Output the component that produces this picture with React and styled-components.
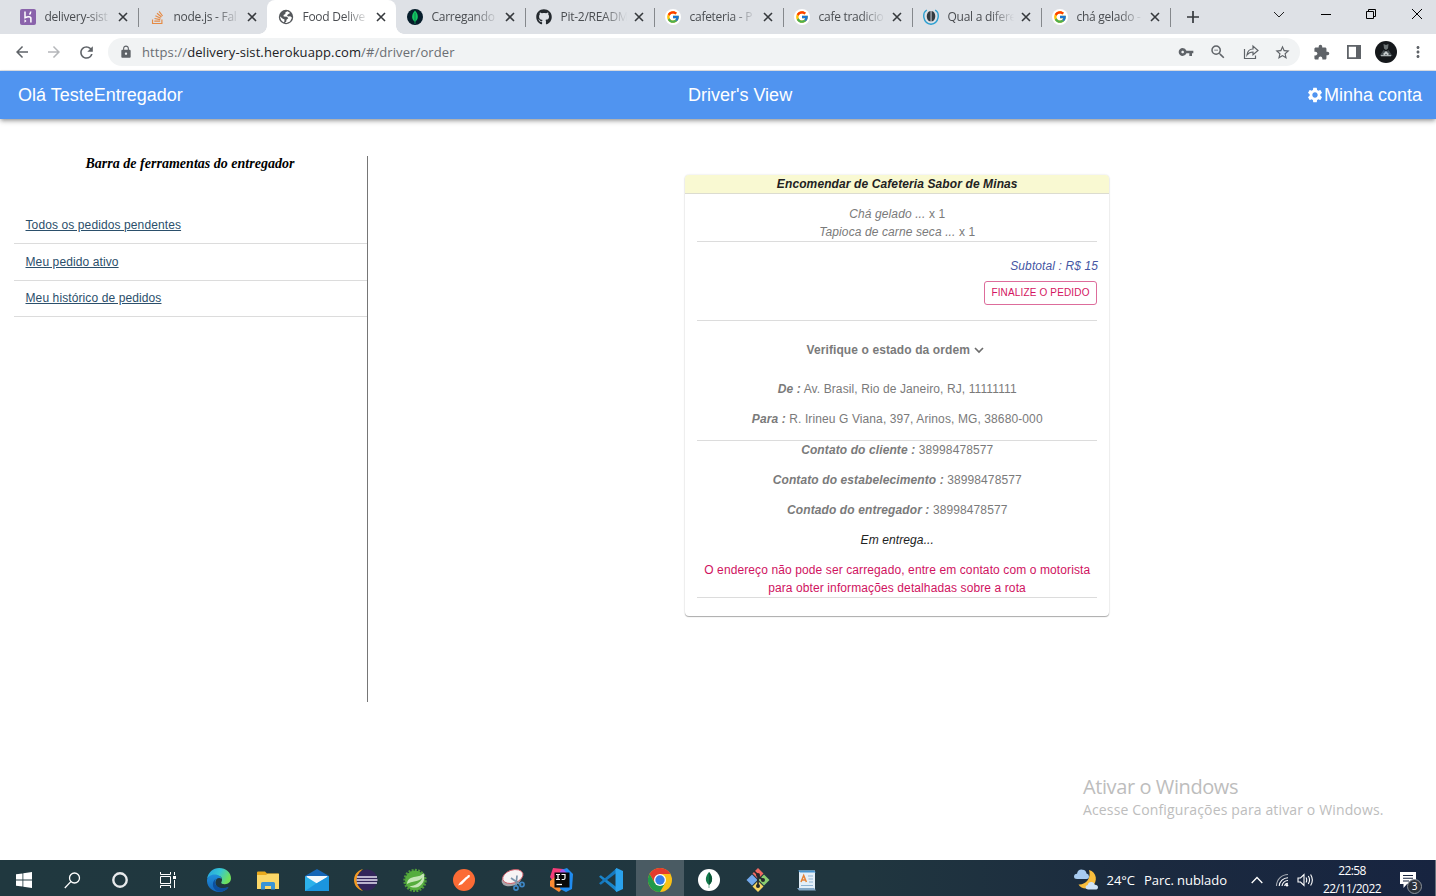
import React from "react";
import styled, { createGlobalStyle } from "styled-components";
import {
  MdVpnKey, MdZoomOut, MdStarBorder, MdExtension, MdSettings, MdLock,
  MdArrowBack, MdArrowForward, MdRefresh, MdMoreVert,
} from "react-icons/md";
import { FaStackOverflow, FaGithub } from "react-icons/fa";
import { FcGoogle } from "react-icons/fc";

const GlobalStyle = createGlobalStyle`
  * { box-sizing: border-box; }
  body { margin: 0; background: #fff; overflow: hidden; }
  svg { display: block; flex: none; }
`;

const ui = `"Open Sans", "Noto Sans", sans-serif`;
const arial = `"Liberation Sans", Arial, sans-serif`;

const Screen = styled.div`
  display: flex;
  flex-direction: column;
  width: 1436px;
  height: 896px;
`;

/* ---------- Browser ---------- */
const TabStrip = styled.div`
  display: flex;
  height: 34px;
  padding-left: 9px;
  background: #dee1e6;
  font-family: ${ui};
`;

const Tab = styled.div`
  position: relative;
  display: flex;
  align-items: center;
  width: 129px;
  height: 34px;
  padding: 0 0 0 11px;
  border-radius: 8px 8px 0 0;
  background: ${(p) => (p.$active ? "#fff" : "transparent")};
  color: #4a4d51;

  &::before {
    content: "";
    display: ${(p) => (p.$active ? "block" : "none")};
    position: absolute;
    left: -8px;
    right: -8px;
    bottom: 0;
    height: 8px;
    background:
      radial-gradient(circle at 0 0, transparent 7.5px, #fff 8px) left / 8px 8px no-repeat,
      radial-gradient(circle at 100% 0, transparent 7.5px, #fff 8px) right / 8px 8px no-repeat;
  }

  &::after {
    content: "";
    position: absolute;
    right: -1px;
    top: 8px;
    width: 1px;
    height: 19px;
    background: ${(p) => (p.$line ? "#85888c" : "transparent")};
  }
`;

const Favicon = styled.span`
  display: flex;
  align-items: center;
  justify-content: center;
  width: 16px;
  height: 16px;
  border-radius: 50%;
  background: ${(p) => p.$bg || "transparent"};
`;

const TabTitle = styled.span`
  width: 72px;
  margin: 0 0 1px 8.5px;
  white-space: nowrap;
  font-size: 12px;
  letter-spacing: -0.27px;
  mask-image: linear-gradient(90deg, #000 58%, transparent 92%);
`;

const TabClose = styled.span`
  display: flex;
  margin-left: 1.5px;
`;

const NewTab = styled.div`
  display: flex;
  align-items: center;
  margin-left: 17px;
`;

const WindowControls = styled.div`
  display: flex;
  align-items: center;
  gap: 34px;
  margin-left: auto;
  padding: 0 13px 6px 0;

  svg:first-child { margin-right: 2px; }
`;

const AddressRow = styled.div`
  display: flex;
  align-items: center;
  height: 37px;
  padding: 0 9px 0 13px;
  border-bottom: 1px solid #dfe1e5;
  background: #fff;
  color: #5f6368;
`;

const NavButtons = styled.div`
  display: flex;
  gap: 14px;
  width: 95px;
`;

const Omnibox = styled.div`
  display: flex;
  align-items: center;
  width: 1192px;
  height: 28px;
  padding: 0 9px 0 11px;
  border-radius: 14px;
  background: #f1f3f4;
`;

const Url = styled.span`
  margin: 0 auto 1px 9px;
  font: 13px/18px ${ui};
  letter-spacing: 0.1px;
  color: #6a6e73;
`;

const Host = styled.span`
  color: #202124;
`;

const OmniIcons = styled.div`
  display: flex;
  align-items: center;
  gap: 15.5px;
`;

const ToolIcons = styled.div`
  display: flex;
  align-items: center;
  gap: 14px;
  margin-left: 13px;

  svg:nth-child(2) { margin-left: 3px; }
  svg:last-child { margin-left: -2px; }
`;

/* ---------- Page ---------- */
const AppBar = styled.header`
  display: grid;
  grid-template-columns: 670px auto 1fr;
  align-items: center;
  flex: none;
  height: 48px;
  padding: 0 14px 0 18px;
  background: #5094f0;
  box-shadow: 0 2px 4px -1px rgba(0, 0, 0, 0.35), 0 3px 5px rgba(0, 0, 0, 0.14);
  color: #fff;
  font: 18px/24px ${arial};
`;

const Account = styled.span`
  display: flex;
  align-items: center;
  justify-content: flex-end;
`;

const Page = styled.main`
  display: flex;
  flex: 1;
  padding: 37px 0 0 14px;
  font-family: ${arial};
`;

const Sidebar = styled.aside`
  width: 354px;
  height: 546px;
  border-right: 1px solid #767676;
`;

const SidebarTitle = styled.h2`
  margin: 0 0 35.5px;
  padding-right: 1px;
  font: italic bold 14px/16px "Liberation Serif", "Times New Roman", serif;
  letter-spacing: 0.016px;
  text-align: center;
  color: #000;
`;

const SidebarItem = styled.div`
  display: flex;
  align-items: center;
  height: 36.5px;
  padding: 0 0 0 11.5px;
  border-bottom: 1px solid #dcdcdc;
`;

const SidebarLink = styled.a`
  font-size: 12px;
  line-height: 18px;
  letter-spacing: 0.107px;
  text-decoration: underline;
  color: #2b4f6b;
`;

const Content = styled.section`
  flex: 1;
  padding: 19px 0 0 317px;
`;

const Card = styled.article`
  width: 424px;
  height: 441px;
  border-radius: 4px;
  overflow: hidden;
  box-shadow: 0 1px 1px rgba(0, 0, 0, 0.3), 0 0 2px rgba(0, 0, 0, 0.16);
  font-size: 12px;
  line-height: 18px;
  letter-spacing: 0.107px;
  text-align: center;
  text-indent: 0.5px;
  color: #7a7a7a;
`;

const CardHeader = styled.div`
  height: 19px;
  border-bottom: 1px solid #dcdcd0;
  background: #f9f9d2;
  font-weight: bold;
  font-style: italic;
  color: #222;
`;

const CardBody = styled.div`
  padding: 11px 12px 0;
`;

const Block = styled.div`
  height: ${(p) => p.$h}px;
  padding-top: ${(p) => p.$top || 0}px;
  border-bottom: 1px solid #dcdcdc;
`;

const Line = styled.div`
  margin-bottom: ${(p) => p.$gap || 0}px;
  color: ${(p) => p.$color || "inherit"};
  font-style: ${(p) => (p.$italic ? "italic" : "normal")};
`;

const Label = styled.span`
  font-weight: bold;
  font-style: italic;
`;

const Subtotal = styled.div`
  margin-right: -1px;
  text-align: right;
  font-style: italic;
  color: #4656a3;
`;

const Finalize = styled.button`
  display: block;
  width: 113px;
  height: 24px;
  margin: 6px 0 0 auto;
  padding: 0;
  border: 1px solid #dd6c9b;
  border-radius: 3px;
  background: #fff;
  color: #d41461;
  font: 10px/22px ${arial};
  letter-spacing: 0.15px;
`;

const StatusToggle = styled.div`
  display: flex;
  align-items: center;
  justify-content: center;
  gap: 4px;
  margin-bottom: 21px;
  padding-right: 4px;
  font-weight: bold;
`;

const Watermark = styled.div`
  position: absolute;
  left: 1083px;
  top: 775px;
  font-family: ${ui};
  color: #bdbdbd;
  white-space: nowrap;
`;

const WatermarkTitle = styled.div`
  font-size: 20px;
  line-height: 24px;
  letter-spacing: -0.41px;
`;

const WatermarkText = styled.div`
  font-size: 14px;
  line-height: 21px;
  letter-spacing: 0.14px;
`;

/* ---------- Taskbar ---------- */
const Taskbar = styled.footer`
  display: flex;
  flex: none;
  height: 36px;
  border-right: 1px solid #68727e;
  background: linear-gradient(90deg, #20383f 0%, #20363f 60%, #1b2a3f 80%, #172440 100%);
  color: #fff;
  font-family: ${ui};
`;

const TaskGroup = styled.div`
  display: flex;
  gap: ${(p) => p.$gap || 0}px;
  margin-left: ${(p) => p.$left || 0}px;
`;

const TaskCell = styled.div`
  display: flex;
  align-items: center;
  justify-content: center;
  width: 48px;
  height: 36px;
  padding-top: 4px;
  background: ${(p) => (p.$active ? "#4a5b63" : "transparent")};
`;

const Tray = styled.div`
  display: flex;
  align-items: center;
  margin-left: auto;
  padding: 4px 19px 0 0;
`;

const Weather = styled.span`
  margin-left: ${(p) => p.$left}px;
  font-size: 13px;
  letter-spacing: -0.04px;
`;

const TrayIcons = styled.div`
  display: flex;
  align-items: center;
  gap: 8px;
  margin-left: 24px;

  svg:first-child { margin-right: 4px; }
`;

const Clock = styled.div`
  width: 62px;
  margin: -1px 0 0 7px;
  font-size: 12px;
  line-height: 18px;
  letter-spacing: -0.57px;
  text-align: center;
`;

const Notifications = styled.div`
  position: relative;
  margin-left: 17px;
`;

const Badge = styled.span`
  position: absolute;
  left: 7px;
  top: 7px;
  width: 15px;
  height: 15px;
  border: 1px solid #8b929b;
  border-radius: 50%;
  background: #2a3039;
  font-size: 10px;
  line-height: 13px;
  text-align: center;
`;

/* ---------- Drawings ---------- */
const HerokuIcon = () => (
  <svg width="16" height="16" viewBox="0 0 16 16">
    <rect width="16" height="16" rx="2" fill="#8a63ab" />
    <path d="M5 2.500v6.200c2.500-1.100 5.900-1.500 5.900.7v4.100M10.700 2.500c0 1.300-.4 2.300-1.300 3" fill="none" stroke="#fff" strokeWidth="1.500" />
    <path d="M4.500 10.300l2 1.700-2 1.700z" fill="#fff" />
  </svg>
);

const GlobeIcon = () => (
  <svg width="16" height="16" viewBox="0 0 16 16">
    <circle cx="8" cy="8" r="7.200" fill="#54575b" />
    <path d="M9.500 2.300l-2 .9-.2 1.800-1.800 1 .2 1.500 3.300.2 1.300 1.500-1.800 1.500-.3 2-1.400 1.200L8.500 14l3.500-1.500 2-3.800-1.800-1.500-2.200.2L9 6.200l1.500-1.300 1.700-.8z" fill="#fff" />
    <path d="M1.800 7.200l3 2.600 1.700.7-.2 2.200-1 .5L3 11z" fill="#fff" />
  </svg>
);

const LeafIcon = ({ leaf = "#13c464" }) => (
  <svg width="16" height="16" viewBox="0 0 16 16">
    <path d="M8 1.500c3.500 3.500 4 8.500.3 11.200V15h-.6v-2.300C4 10 4.500 5 8 1.500z" fill={leaf} />
    <path d="M8 4v9" stroke="#0a5a37" strokeWidth=".6" />
  </svg>
);

const BeanIcon = () => (
  <svg width="16" height="16" viewBox="0 0 16 16" fill="none">
    <path d="M3.800 1C-1 4-.3 14.500 8 15.200 16.300 14.500 17 4 12.200 1" stroke="#2c9fd0" strokeWidth="1.400" />
    <path d="M7.600 2C2.500 2.600 2.500 11.900 7.600 12.600zM8.500 2c5.100.6 5.100 9.900 0 10.600z" fill="#343a40" />
  </svg>
);

const TabCloseIcon = () => (
  <svg width="10" height="10" viewBox="0 0 10 10"><path d="M1 1l8 8M9 1L1 9" stroke="#36393d" strokeWidth="1.600" /></svg>
);

const PlusIcon = () => (
  <svg width="12" height="12" viewBox="0 0 12 12"><path d="M6 0v12M0 6h12" stroke="#36393d" strokeWidth="1.700" /></svg>
);

const ToggleChevron = () => (
  <svg width="10" height="8" viewBox="0 0 10 8" fill="none" stroke="#6d6d6d" strokeWidth="1.700"><path d="M1 2l4 4 4-4" /></svg>
);

const ChevronDown = () => (
  <svg width="12" height="12" viewBox="0 0 12 12" fill="none" stroke="#222">
    <path d="M1 4l5 5 5-5" />
  </svg>
);

const MinimizeIcon = () => (
  <svg width="10" height="11" viewBox="0 0 10 11"><path d="M0 5.500h10" stroke="#000" /></svg>
);

const RestoreIcon = () => (
  <svg width="12" height="12" viewBox="0 0 12 12" fill="none" stroke="#000">
    <path d="M1.500 3.500h7v7h-7zM3.500 3.500v-2h7v7h-2" />
  </svg>
);

const CloseIcon = () => (
  <svg width="12" height="12" viewBox="0 0 12 12"><path d="M1 1l10 10M11 1L1 11" stroke="#000" /></svg>
);

const ShareIcon = () => (
  <svg width="16" height="16" viewBox="0 0 16 16" fill="none" stroke="#5f6368" strokeWidth="1.200">
    <path d="M1.500 5v9.500h11v-3" />
    <path d="M4 11c.5-4 2.500-6 6-6V2l5 4.500-5 4.300V8C7.500 8 5.500 9 4 11z" />
  </svg>
);

const SidePanelIcon = () => (
  <svg width="14" height="14" viewBox="0 0 14 14">
    <path d="M.9.9h12.200v12.200H.9z" fill="none" stroke="#5f6368" strokeWidth="1.800" />
    <path d="M9 0h5v14H9z" fill="#5f6368" />
  </svg>
);

const AvatarIcon = () => (
  <svg width="22" height="22" viewBox="0 0 22 22">
    <circle cx="11" cy="11" r="11" fill="#15181b" />
    <path d="M8.500 3l2.500 1 2.500-1-.5 4.500L11 9 9 7.500z" fill="#6d7475" />
    <path d="M4.500 15l4-6 2.500 1.500L13.500 9l4 6z" fill="#454d50" />
    <path d="M8 13l3-3 3 3-1.500 1.500L11 12.700 9.500 14.500z" fill="#c5cbcc" />
    <path d="M6 14.700h10" stroke="#bcc2c3" strokeWidth="1.100" />
  </svg>
);

const StartIcon = () => (
  <svg width="16" height="16" viewBox="0 0 16 16" fill="#fff">
    <path d="M0 2.300l6.500-.9v6.200H0zM7.300 1.300L16 0v7.600H7.300zM0 8.400h6.500v6.200L0 13.700zM7.300 8.400H16V16l-8.700-1.300z" />
  </svg>
);

const SearchIcon = () => (
  <svg width="17" height="17" viewBox="0 0 17 17" fill="none" stroke="#fff" strokeWidth="1.300">
    <circle cx="10.500" cy="6" r="5" /><path d="M6.800 9.600L.8 16" />
  </svg>
);

const CortanaIcon = () => (
  <svg width="16" height="16" viewBox="0 0 16 16"><circle cx="8" cy="8" r="6.700" fill="none" stroke="#e8eaec" strokeWidth="2.400" /></svg>
);

const TaskViewIcon = () => (
  <svg width="17" height="16" viewBox="0 0 17 16" fill="none" stroke="#fff">
    <path d="M.5 0v2.500h10V0M.5 16v-2.500h10V16M.5 4.500h10v7H.5zM14.500 0v3M14.500 8v8" />
    <path d="M13 4h3v3h-3z" fill="#fff" stroke="none" />
  </svg>
);

const EdgeIcon = () => (
  <svg width="24" height="24" viewBox="0 0 24 24">
    <defs>
      <linearGradient id="edgeTop" x1="0" x2="1" y2=".4"><stop stopColor="#239fe0" /><stop offset=".55" stopColor="#36c6d4" /><stop offset="1" stopColor="#6ee05c" /></linearGradient>
      <linearGradient id="edgeSide" x1="0" x2="0" y2="1"><stop stopColor="#1f8fdb" /><stop offset="1" stopColor="#1464b8" /></linearGradient>
    </defs>
    <path d="M0 11C1 4.500 6 0 12.200 0 19 0 24 4.600 24 10.300c0 3.700-2.800 5.900-6.200 5.900-2.600 0-3.900-1-3.500-2 1.800-2.700.4-6.500-3.700-6.500C6.200 7.700 1.500 8 0 11z" fill="url(#edgeTop)" />
    <path d="M0 12C.2 8.400 4.500 5.800 9 6.500c3.400.5 5.500 2.500 5.600 4.600-3-2.700-6.800.2-6.100 4.300.7 3.900 5.200 6.500 12.900 3.800C19.400 22.300 16 24 12 24 5 24-.4 18.600 0 12z" fill="url(#edgeSide)" />
    <path d="M9.400 10.500c-3.500 3.200-.8 8.700 5 9.400 2.800.4 5.200-.1 7.200-.9C17.800 24.500 11 25 8.200 21.800 4.500 18.300 5.400 12.600 9.400 10.500z" fill="#0d4f9d" />
  </svg>
);

const FolderIcon = () => (
  <svg width="22" height="19" viewBox="0 0 22 19">
    <path d="M0 1.500Q0 .5 1 .5h7l2 2h11q1 0 1 1V17H0z" fill="#e9a91c" />
    <path d="M0 4h9l1.500-1.300H22V18H0z" fill="#fbd768" />
    <path d="M4 18.500v-6q0-1.500 1.500-1.500h11q1.500 0 1.500 1.500v6h-4V15H8v3.500z" fill="#3a94d6" />
  </svg>
);

const MailIcon = () => (
  <svg width="24" height="22" viewBox="0 0 24 22">
    <path d="M0 7L12 0l12 7v6H0z" fill="#1565b6" />
    <path d="M1.500 7h21v8h-21z" fill="#f4f8fb" />
    <path d="M0 7l12 7.500L24 7v15H0z" fill="#2cb1ea" />
    <path d="M0 22L12 14 24 7v15z" fill="#1b95df" />
  </svg>
);

const EclipseIcon = () => (
  <svg width="24" height="22" viewBox="0 0 24 22">
    <path d="M9 0C-3 3-3 19 9 22 2 17 2 5 9 0z" fill="#f39a22" />
    <circle cx="13" cy="11" r="10.500" fill="#33265a" />
    <path d="M3 8h20M2.500 11h21M3 14h20" stroke="#e8e4f2" strokeWidth="1.300" />
  </svg>
);

const SpringIcon = () => (
  <svg width="24" height="24" viewBox="0 0 24 24">
    <circle cx="12" cy="12.500" r="10.600" fill="none" stroke="#4f9d3a" strokeWidth="2.200" strokeDasharray="2 1.300" />
    <circle cx="12" cy="12.500" r="10" fill="#55ad3d" />
    <path d="M20.500 5C23 12 19 18.500 13 19.500c-2.500.4-5-.3-6.500-1.300C12 18 17.500 15 19.500 9.500 16 14 9 13 4 16c0-4.500 4-7 8.500-7.300 3.500-.2 6-1.400 8-3.700z" fill="#c4e6b6" />
  </svg>
);

const PostmanIcon = () => (
  <svg width="22" height="22" viewBox="0 0 22 22">
    <circle cx="11" cy="11" r="11" fill="#fb6b35" />
    <path d="M5 16.500l2-3 6.500-6 1.500 1.500-6 6.200z" fill="#fff" />
    <path d="M13.500 8.500l1.500-2.500 2 .3-.5 2-2.200 1.200z" fill="#fff" />
  </svg>
);

const SnipIcon = () => (
  <svg width="24" height="22" viewBox="0 0 24 22">
    <ellipse cx="10.500" cy="10.500" rx="10.300" ry="6.500" fill="#a8a5aa" transform="rotate(-18 10 10)" />
    <ellipse cx="12" cy="7.500" rx="10.500" ry="6.500" fill="#f7f4f5" stroke="#cf5a66" strokeWidth=".9" transform="rotate(-18 12 8)" />
    <path d="M10 9l10 7M16 6.500L15 17" stroke="#7c96ad" strokeWidth="1.700" />
    <g fill="none" stroke="#3e87c6" strokeWidth="1.600"><circle cx="21" cy="15.500" r="2.100" /><circle cx="15" cy="19" r="2.100" /></g>
  </svg>
);

const IdeaIcon = () => (
  <svg width="24" height="24" viewBox="0 0 24 24">
    <path d="M3 0l10 1-6 11-7 7 2-7-2-3z" fill="#f63d79" />
    <path d="M0 13l6-5 6 13-3 3-9-6z" fill="#fb8a32" />
    <path d="M11 2l6-2 6 6-1 15-6 3-6-3z" fill="#208cf0" />
    <path d="M10 3l3-2 5 5-8 2z" fill="#a45be6" />
    <rect x="4.500" y="4.500" width="15" height="15" fill="#090909" />
    <path d="M6 6.500h4M8 6.500v5M6 11.500h4M11.500 6.500H15V10q0 1.500-1.500 1.500h-1.800" fill="none" stroke="#fff" strokeWidth="1.200" />
    <path d="M6.500 16.500H12" stroke="#fff" strokeWidth="1.300" />
  </svg>
);

const CodeIcon = () => (
  <svg width="24" height="24" viewBox="0 0 24 24">
    <path d="M0 8.700L1.800 7.200 18 19.500V24z" fill="#1a86cc" />
    <path d="M0 15.300L1.800 16.800 18 4.500V0z" fill="#1679bf" />
    <path d="M17.500 0L24 3v18l-6.500 3-1-1.200V1.200z" fill="#2aa2ec" />
  </svg>
);

const ChromeIcon = () => (
  <svg width="24" height="24" viewBox="0 0 24 24">
    <circle cx="12" cy="12" r="12" fill="#fbc116" />
    <path d="M1.600 6A12 12 0 0 1 22.400 6H12L7 15z" fill="#e33b2e" />
    <path d="M1.600 6A12 12 0 0 0 12 24l5.200-9-10.400 0z" fill="#229a4b" />
    <circle cx="12" cy="12" r="6" fill="#fff" />
    <circle cx="12" cy="12" r="4.700" fill="#377de9" />
  </svg>
);

const CompassIcon = () => (
  <svg width="22" height="22" viewBox="0 0 22 22">
    <circle cx="11" cy="11" r="11" fill="#fff" />
    <path d="M11 3c4 4.500 4.200 9.500.3 12.700V19h-.6v-3.300C6.800 12.500 7 7.500 11 3z" fill="#147a4c" />
    <path d="M11 3c4 4.500 4.200 9.500.3 12.700H11z" fill="#0b5738" />
  </svg>
);

const GitIcon = () => (
  <svg width="24" height="24" viewBox="0 0 24 24">
    <path d="M12 0l5.500 5.500L12 11 6.500 5.500z" fill="#ef6a62" />
    <path d="M6 6.500l5.500 5.500L6 17.500.5 12z" fill="#73a9ed" />
    <path d="M18 6.500l5.500 5.500-5.500 5.500-5.500-5.500z" fill="#8bcf70" />
    <path d="M12 13l5.500 5.500L12 24l-5.500-5.500z" fill="#f5d464" />
    <path d="M8 3l4 4v11M12 8l5 4" stroke="#24292d" strokeWidth="1.700" fill="none" />
    <g fill="#24292d"><circle cx="12" cy="7" r="2" /><circle cx="17" cy="12" r="2" /><circle cx="12" cy="18" r="2" /></g>
  </svg>
);

const WordpadIcon = () => (
  <svg width="20" height="22" viewBox="0 0 20 22">
    <path d="M2 1.500h16V21H2z" fill="#e4eff8" />
    <path d="M1 1.500h16l2 2H3z" fill="#4694cf" />
    <path d="M0 19h17l2 2.500H2z" fill="#83a7c6" />
    <path d="M4 13l2.700-6.500L9.400 13M5 11h3.500" fill="none" stroke="#e68236" strokeWidth="1.500" />
    <path d="M11 7h5M11.500 10H16M12 13h4M4 16.500h12" stroke="#8fb5d6" strokeWidth="1" />
  </svg>
);

const WeatherIcon = () => (
  <svg width="24" height="22" viewBox="0 0 24 22">
    <path d="M15 1c8 2 9 12 3 16.500-4.500 3.500-11 2.500-13.500-2C12 16 17.500 9 15 1z" fill="#f9bd3c" />
    <path d="M3 10Q0 10 0 7.500 0 5 3 4.700 4 0 8.500.7 12 1 12.500 4.500 15 5 15 7.500 15 10 12.500 10z" fill="#a8cbf0" />
    <path d="M14 20.500q-2.500-.2-2.500-2.300 0-2 2.300-2.300.8-3.200 4-2.800 2.500.2 3 2.700Q24 16 24 18.200q0 2.300-2.700 2.300z" fill="#cfe2f6" />
  </svg>
);

const UpIcon = () => (
  <svg width="12" height="12" viewBox="0 0 12 12" fill="none" stroke="#fff" strokeWidth="1.300"><path d="M.7 9L6 3.500 11.300 9" /></svg>
);

const WifiIcon = () => (
  <svg width="14" height="14" viewBox="0 0 14 14" fill="none" stroke="#fff" strokeWidth="1.100">
    <path d="M1.500 13A11.500 11.500 0 0 1 13 1.500" opacity=".6" />
    <path d="M4.200 13A8.800 8.800 0 0 1 13 4.700M7 13a6 6 0 0 1 6-5.500M9.700 13A3.300 3.300 0 0 1 13 10.200" />
    <circle cx="12" cy="12.200" r="1.200" fill="#fff" stroke="none" />
  </svg>
);

const VolumeIcon = () => (
  <svg width="17" height="14" viewBox="0 0 17 14" fill="none" stroke="#fff" strokeWidth="1.100">
    <path d="M1 5h2.500L7 1.500v11L3.500 9H1zM9 4.500q1.500 2.500 0 5M11.300 3q2.500 4 0 8M13.600 1.500q3.500 5.500 0 11" />
  </svg>
);

const MessageIcon = () => (
  <svg width="16" height="16" viewBox="0 0 16 16">
    <path d="M0 0h16v12H7l-3.500 4v-4H0z" fill="#fff" />
    <path d="M3 3.500h10M3 6.200h10M3 9h6" stroke="#182641" strokeWidth="1.100" />
  </svg>
);

const tabs = [
  { title: "delivery-sist", icon: <HerokuIcon />, line: true },
  { title: "node.js - Fal", icon: <FaStackOverflow size={15} color="#e58a45" /> },
  { title: "Food Delive", icon: <GlobeIcon />, active: true },
  { title: "Carregando", icon: <LeafIcon />, bg: "#061d2b", line: true },
  { title: "Pit-2/READM", icon: <FaGithub size={16} color="#24292e" />, line: true },
  { title: "cafeteria - P", icon: <FcGoogle size={14} />, bg: "#fff", line: true },
  { title: "cafe tradicio", icon: <FcGoogle size={14} />, bg: "#fff", line: true },
  { title: "Qual a difere", icon: <BeanIcon />, line: true },
  { title: "chá gelado -", icon: <FcGoogle size={14} />, bg: "#fff", line: true },
];

const systemIcons = [StartIcon, SearchIcon, CortanaIcon, TaskViewIcon];
const appIcons = [
  EdgeIcon, FolderIcon, MailIcon, EclipseIcon, SpringIcon, PostmanIcon, SnipIcon,
  IdeaIcon, CodeIcon, ChromeIcon, CompassIcon, GitIcon, WordpadIcon,
];

export default function App() {
  return (
    <Screen>
      <GlobalStyle />
      <TabStrip>
        {tabs.map((t) => (
          <Tab key={t.title} $active={t.active} $line={t.line}>
            <Favicon $bg={t.bg}>{t.icon}</Favicon>
            <TabTitle>{t.title}</TabTitle>
            <TabClose><TabCloseIcon /></TabClose>
          </Tab>
        ))}
        <NewTab><PlusIcon /></NewTab>
        <WindowControls>
          <ChevronDown />
          <MinimizeIcon />
          <RestoreIcon />
          <CloseIcon />
        </WindowControls>
      </TabStrip>

      <AddressRow>
        <NavButtons>
          <MdArrowBack size={18} />
          <MdArrowForward size={18} color="#b5b7ba" />
          <MdRefresh size={19} />
        </NavButtons>
        <Omnibox>
          <MdLock size={14} />
          <Url>https://<Host>delivery-sist.herokuapp.com</Host>/#/driver/order</Url>
          <OmniIcons>
            <MdVpnKey size={16} />
            <MdZoomOut size={18} />
            <ShareIcon />
            <MdStarBorder size={17} />
          </OmniIcons>
        </Omnibox>
        <ToolIcons>
          <MdExtension size={17} />
          <SidePanelIcon />
          <AvatarIcon />
          <MdMoreVert size={18} />
        </ToolIcons>
      </AddressRow>

      <AppBar>
        <span>Olá TesteEntregador</span>
        <span>Driver's View</span>
        <Account><MdSettings size={18} />Minha conta</Account>
      </AppBar>

      <Page>
        <Sidebar>
          <SidebarTitle>Barra de ferramentas do entregador</SidebarTitle>
          <SidebarItem><SidebarLink>Todos os pedidos pendentes</SidebarLink></SidebarItem>
          <SidebarItem><SidebarLink>Meu pedido ativo</SidebarLink></SidebarItem>
          <SidebarItem><SidebarLink>Meu histórico de pedidos</SidebarLink></SidebarItem>
        </Sidebar>
        <Content>
          <Card>
            <CardHeader>Encomendar de Cafeteria Sabor de Minas</CardHeader>
            <CardBody>
              <Block $h={37}>
                <Line><i>Chá gelado ...</i> x 1</Line>
                <Line><i>Tapioca de carne seca ...</i> x 1</Line>
              </Block>
              <Block $h={79} $top={15}>
                <Subtotal>Subtotal : R$ 15</Subtotal>
                <Finalize>FINALIZE O PEDIDO</Finalize>
              </Block>
              <Block $h={120} $top={20}>
                <StatusToggle>Verifique o estado da ordem <ToggleChevron /></StatusToggle>
                <Line $gap={12}><Label>De :</Label> Av. Brasil, Rio de Janeiro, RJ, 11111111</Line>
                <Line><Label>Para :</Label> R. Irineu G Viana, 397, Arinos, MG, 38680-000</Line>
              </Block>
              <Block $h={157}>
                <Line $gap={12}><Label>Contato do cliente :</Label> 38998478577</Line>
                <Line $gap={12}><Label>Contato do estabelecimento :</Label> 38998478577</Line>
                <Line $gap={12}><Label>Contado do entregador :</Label> 38998478577</Line>
                <Line $gap={12} $italic $color="#222">Em entrega...</Line>
                <Line $color="#d0135f">O endereço não pode ser carregado, entre em contato com o motorista para obter informações detalhadas sobre a rota</Line>
              </Block>
            </CardBody>
          </Card>
        </Content>
      </Page>

      <Watermark>
        <WatermarkTitle>Ativar o Windows</WatermarkTitle>
        <WatermarkText>Acesse Configurações para ativar o Windows.</WatermarkText>
      </Watermark>

      <Taskbar>
        <TaskGroup>
          {systemIcons.map((Icon, i) => <TaskCell key={i}><Icon /></TaskCell>)}
        </TaskGroup>
        <TaskGroup $gap={1} $left={3}>
          {appIcons.map((Icon, i) => <TaskCell key={i} $active={Icon === ChromeIcon}><Icon /></TaskCell>)}
        </TaskGroup>
        <Tray>
          <WeatherIcon />
          <Weather $left={8}>24°C</Weather>
          <Weather $left={9}>Parc. nublado</Weather>
          <TrayIcons><UpIcon /><WifiIcon /><VolumeIcon /></TrayIcons>
          <Clock>22:58<br />22/11/2022</Clock>
          <Notifications><MessageIcon /><Badge>3</Badge></Notifications>
        </Tray>
      </Taskbar>
    </Screen>
  );
}
